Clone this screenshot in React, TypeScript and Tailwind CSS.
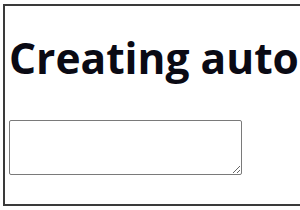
import React from 'react';

function App() {
  return (
    <div className="w-[300px] h-[210px] bg-white overflow-hidden pl-[3px] pt-[4px]">
      <div className="w-[330px] h-[202px] border-2 border-r-0 border-[#3a3a3a] pl-[4px] pt-[23px] flex flex-col">
        <h1
          className="text-[42.5px] leading-[58px] font-bold text-[#0a0a14] whitespace-nowrap"
          style={{ fontFamily: '"Open Sans", "Noto Sans", sans-serif' }}
        >
          Creating auto
        </h1>
        <textarea className="mt-[33px] w-[233px] h-[55px] border border-[#7a7a7a] rounded-[2px] bg-white" />
      </div>
    </div>
  );
}

export default App;
